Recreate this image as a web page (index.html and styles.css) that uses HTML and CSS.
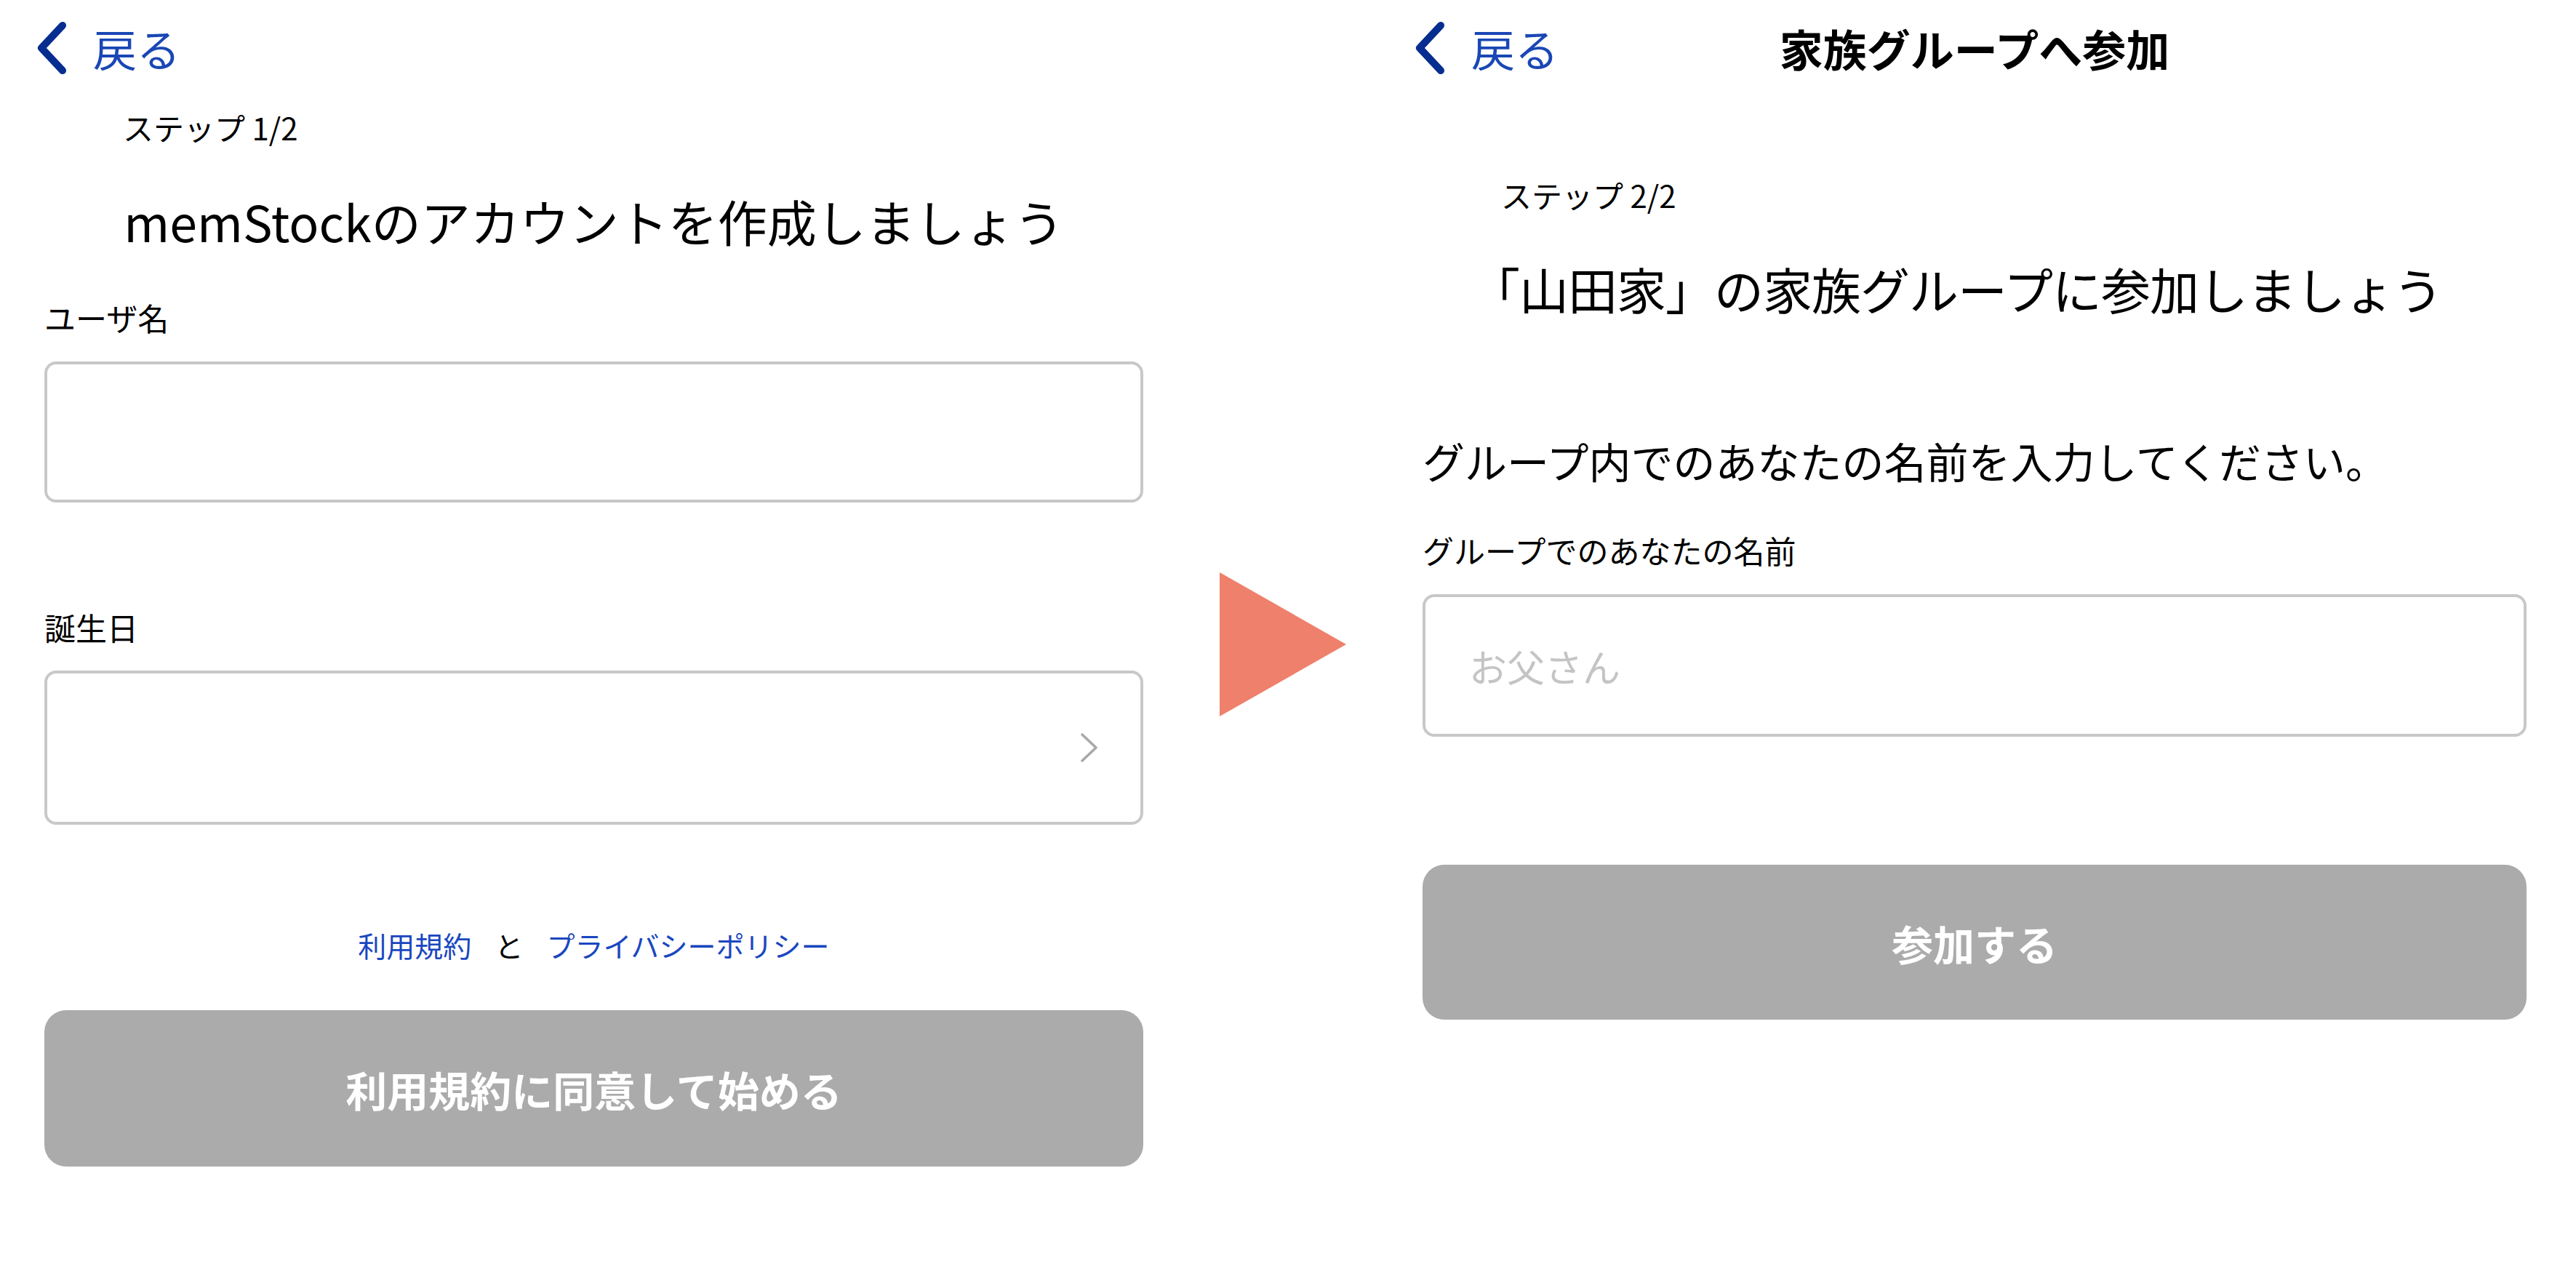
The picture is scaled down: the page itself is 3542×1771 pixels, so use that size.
FILE: index.html
```html
<!DOCTYPE html>
<html lang="ja">
<head>
    <meta charset="UTF-8">
    <title>memStock 登録フロー</title>
    <link rel="stylesheet" href="styles.css">
</head>
<body>
    <div class="screens">
        <!-- ステップ1: アカウント作成 -->
        <section class="screen screen-account">
            <header class="nav">
                <a class="back" href="#">
                    <svg width="46" height="76" viewBox="0 0 46 76"><polyline points="38,7 9,38 38,69" /></svg>
                    <span>戻る</span>
                </a>
            </header>

            <p class="step">ステップ 1/2</p>
            <h1 class="title">memStockのアカウントを作成しましょう</h1>

            <label class="field-label" for="username">ユーザ名</label>
            <input class="field" type="text" id="username">

            <label class="field-label field-label-birth">誕生日</label>
            <button class="field field-select" type="button">
                <svg width="28" height="44" viewBox="0 0 28 44"><polyline points="4,4 23,22 4,40" /></svg>
            </button>

            <p class="legal">
                <a href="#">利用規約</a>
                <span>と</span>
                <a href="#">プライバシーポリシー</a>
            </p>

            <button class="submit submit-account" type="button" disabled>利用規約に同意して始める</button>
        </section>

        <!-- 画面遷移の矢印 -->
        <div class="transition">
            <svg width="174" height="198" viewBox="0 0 174 198"><polygon points="0,0 174,99 0,198" /></svg>
        </div>

        <!-- ステップ2: 家族グループへ参加 -->
        <section class="screen screen-join">
            <header class="nav">
                <a class="back" href="#">
                    <svg width="46" height="76" viewBox="0 0 46 76"><polyline points="38,7 9,38 38,69" /></svg>
                    <span>戻る</span>
                </a>
                <div class="nav-title">家族グループへ参加</div>
            </header>

            <p class="step">ステップ 2/2</p>
            <h1 class="title">「山田家」の家族グループに参加しましょう</h1>

            <p class="lead">グループ内でのあなたの名前を入力してください。</p>

            <label class="field-label" for="nickname">グループでのあなたの名前</label>
            <input class="field field-nickname" type="text" id="nickname" placeholder="お父さん">

            <button class="submit submit-join" type="button" disabled>参加する</button>
        </section>
    </div>
</body>
</html>
```

FILE: styles.css
```css
/* Dasar halaman */
body {
    margin: 0;
    font-family: "Noto Sans CJK JP", "Noto Sans", sans-serif;
    color: #000;
    background: #fff;
}

p, h1 {
    margin: 0;
}

/* Dua layar berdampingan */
.screens {
    display: flex;
    min-height: 100vh;
    padding: 0 68px 0 61px;
    box-sizing: border-box;
}

.screen {
    display: flex;
    flex-direction: column;
}

.screen-account {
    width: 1511px;
}

.screen-join {
    width: 1518px;
}

/* Panah di tengah */
.transition {
    width: 384px;
    display: flex;
    align-items: center;
    justify-content: center;
}

.transition polygon {
    fill: #ee806c;
}

/* Navigasi atas */
.nav {
    height: 132px;
    display: grid;
    grid-template-columns: 1fr auto 1fr;
    align-items: center;
}

.back {
    display: flex;
    align-items: center;
    gap: 34px;
    margin-left: -13px;
    font-size: 60px;
    line-height: 1;
    color: #1a47b5;
    text-decoration: none;
}

.back polyline {
    fill: none;
    stroke: #062d8f;
    stroke-width: 10;
    stroke-linecap: round;
    stroke-linejoin: round;
}

.nav-title {
    font-size: 60px;
    font-weight: bold;
    line-height: 1;
}

/* Judul langkah */
.step {
    margin-top: 22px;
    padding-left: 108px;
    font-size: 42px;
    line-height: 42px;
}

.screen-join .step {
    margin-top: 115px;
}

.title {
    margin-top: 74px;
    font-size: 68px;
    font-weight: normal;
    line-height: 68px;
    text-align: center;
}

.screen-join .title {
    padding-right: 50px;
    letter-spacing: -1px;
}

.lead {
    margin-top: 173px;
    font-size: 58px;
    line-height: 58px;
}

/* Label dan kolom input */
.field-label {
    display: block;
    margin-top: 77px;
    font-size: 43px;
    line-height: 43px;
}

.field-label-birth {
    margin-top: 150px;
}

.screen-join .field-label {
    margin-top: 73px;
}

.field {
    display: block;
    width: 100%;
    height: 194px;
    margin-top: 39px;
    box-sizing: border-box;
    border: 4px solid #c8c8c8;
    border-radius: 16px;
    background: #fff;
    font-family: inherit;
    font-size: 52px;
    padding: 0 60px;
    outline: none;
}

.field-select {
    height: 212px;
    margin-top: 38px;
    display: flex;
    align-items: center;
    justify-content: flex-end;
    padding-right: 56px;
    cursor: pointer;
}

.field-select polyline {
    fill: none;
    stroke: #a8a8a8;
    stroke-width: 3.5;
    stroke-linecap: round;
    stroke-linejoin: round;
}

.field-nickname {
    height: 196px;
}

.field::placeholder {
    color: #c4c4c4;
}

/* Tautan ketentuan */
.legal {
    margin-top: 146px;
    display: flex;
    justify-content: center;
    gap: 32px;
    font-size: 39px;
    line-height: 39px;
}

.legal a {
    color: #1a47c0;
    text-decoration: none;
}

/* Tombol utama (nonaktif) */
.submit {
    display: block;
    width: 100%;
    border: none;
    border-radius: 30px;
    background: #ababab;
    color: #fff;
    font-family: inherit;
    font-size: 57px;
    font-weight: bold;
}

.submit-account {
    height: 215px;
    margin-top: 70px;
}

.submit-join {
    height: 213px;
    margin-top: 176px;
}
```
